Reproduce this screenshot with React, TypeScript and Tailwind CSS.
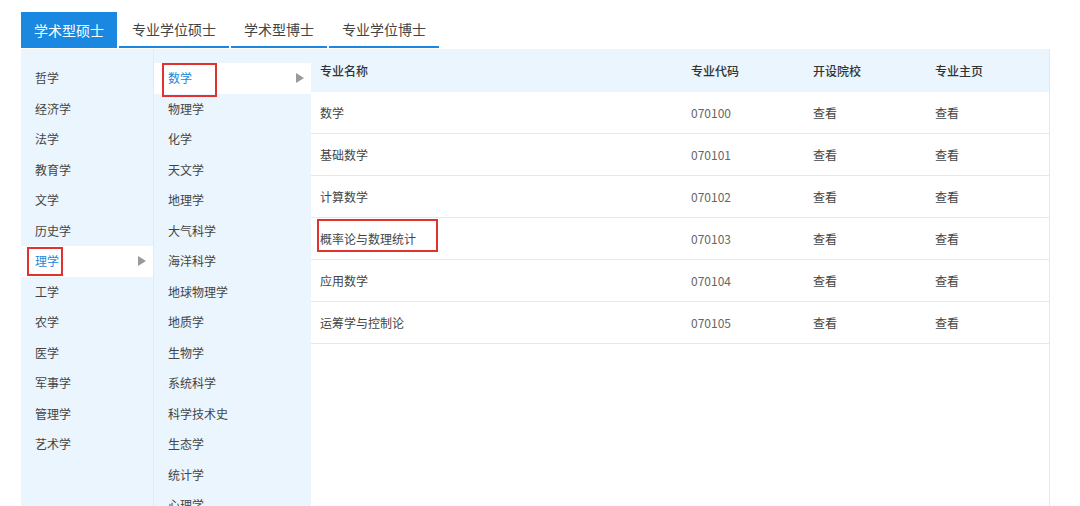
import React from "react";

const tabs = ["学术型硕士", "专业学位硕士", "学术型博士", "专业学位博士"];

const categories = ["哲学", "经济学", "法学", "教育学", "文学", "历史学", "理学", "工学", "农学", "医学", "军事学", "管理学", "艺术学"];

const subjects = ["数学", "物理学", "化学", "天文学", "地理学", "大气科学", "海洋科学", "地球物理学", "地质学", "生物学", "系统科学", "科学技术史", "生态学", "统计学", "心理学"];

const majors = [
  { name: "数学", code: "070100" },
  { name: "基础数学", code: "070101" },
  { name: "计算数学", code: "070102" },
  { name: "概率论与数理统计", code: "070103" },
  { name: "应用数学", code: "070104" },
  { name: "运筹学与控制论", code: "070105" },
];

function Arrow() {
  return (
    <svg width="8" height="10" viewBox="0 0 8 10" className="shrink-0">
      <polygon points="0,0 8,5 0,10" fill="#9a9a9a" />
    </svg>
  );
}

function MenuItem({ label, active, boxWidth }: { label: string; active?: boolean; boxWidth?: string }) {
  return (
    <div className={`relative flex h-[30.5px] items-center justify-between pl-[14px] pr-[7px] ${active ? "bg-white text-[#1a88e0]" : "text-[#444]"}`}>
      <span>{label}</span>
      {active && <Arrow />}
      {active && boxWidth && <div className={`pointer-events-none absolute border-2 border-[#e0322f] ${boxWidth}`} />}
    </div>
  );
}

export default function App() {
  return (
    <div
      className="h-[506px] w-[1080px] overflow-hidden bg-white pl-[21px] pt-[12px] text-[12px]"
      style={{ fontFamily: '"Noto Sans CJK SC", "Noto Sans", sans-serif' }}
    >
      <div className="flex gap-[2px]">
        {tabs.map((t, i) => (
          <div
            key={t}
            className={`flex h-[36px] items-center px-[13px] text-[14px] ${i === 0 ? "bg-[#1a88e0] text-white" : "border-b-2 border-[#1a88e0] text-[#444]"}`}
          >
            {t}
          </div>
        ))}
      </div>

      <div className="mt-[1px] flex w-[1029px] items-stretch">
        <div className="w-[132px] shrink-0 bg-[#eaf5fd] pt-[14px]">
          {categories.map((c) => (
            <MenuItem key={c} label={c} active={c === "理学"} boxWidth="left-[6px] top-[1px] h-[29px] w-[36px]" />
          ))}
        </div>

        <div className="w-[158px] shrink-0 border-l border-[#e0ecf5] bg-[#eaf5fd] pt-[14px]">
          {subjects.map((s) => (
            <MenuItem key={s} label={s} active={s === "数学"} boxWidth="left-[8px] top-0 h-[34px] w-[55px]" />
          ))}
        </div>

        <div className="flex-1 border-r border-[#e8e8e8]">
          <div className="flex h-[43px] items-center bg-[#eaf5fd] font-medium text-[#333]">
            <div className="w-[371px] pl-[9px]">专业名称</div>
            <div className="w-[122px] pl-[9px]">专业代码</div>
            <div className="w-[122px] pl-[9px]">开设院校</div>
            <div className="flex-1 pl-[9px]">专业主页</div>
          </div>
          {majors.map((m) => (
            <div key={m.code} className="flex h-[42px] items-center border-b border-[#e8e8e8] text-[#444]">
              <div className="relative w-[371px] pl-[9px]">
                {m.name}
                {m.code === "070103" && <div className="pointer-events-none absolute left-[6px] top-[-11px] h-[33px] w-[121px] border-2 border-[#e0322f]" />}
              </div>
              <div className="w-[122px] pl-[9px] text-[#666]">{m.code}</div>
              <div className="w-[122px] pl-[9px]">查看</div>
              <div className="flex-1 pl-[9px]">查看</div>
            </div>
          ))}
        </div>
      </div>
    </div>
  );
}
